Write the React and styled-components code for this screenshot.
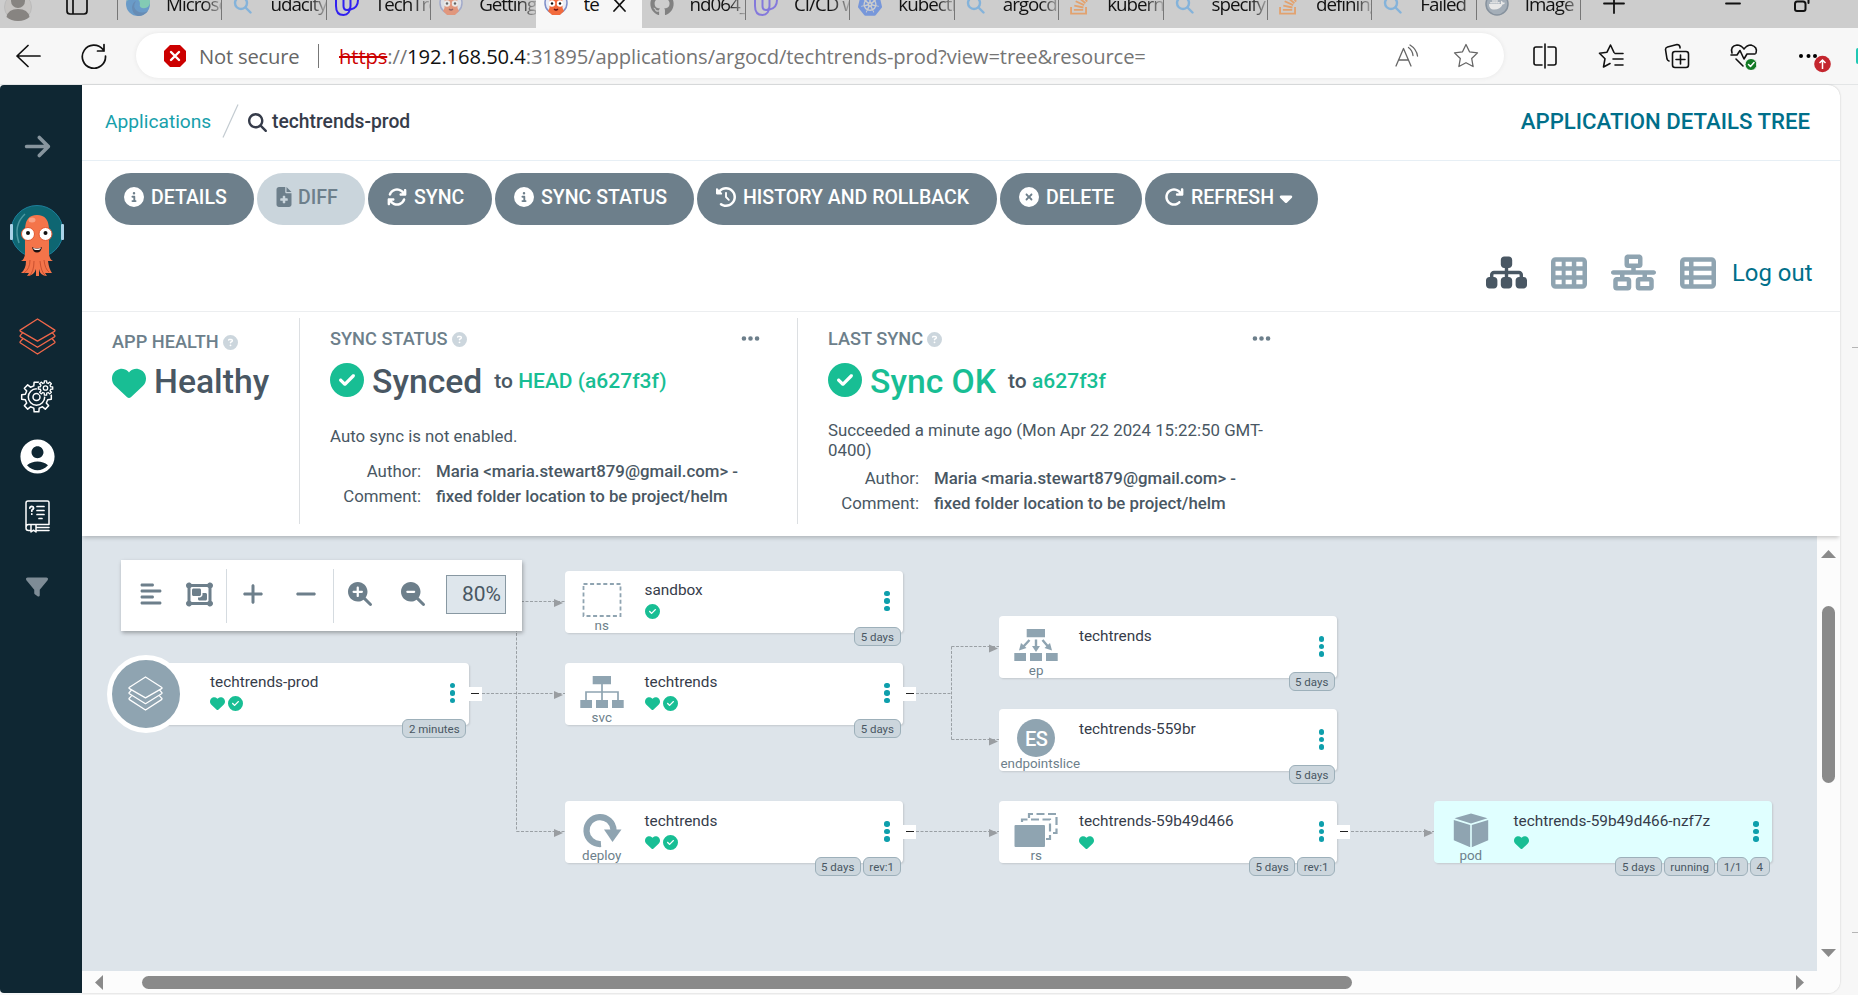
import React from 'react';
import styled, { createGlobalStyle, css } from 'styled-components';
import {
  FaCircleInfo, FaFileMedical, FaArrowsRotate, FaClockRotateLeft, FaCircleXmark,
  FaArrowRotateRight, FaCaretDown, FaSitemap, FaTableCells, FaNetworkWired, FaTableList,
  FaHeart, FaCircleCheck, FaCircleQuestion, FaEllipsis, FaAlignLeft, FaObjectGroup,
  FaPlus, FaMinus, FaMagnifyingGlassPlus, FaMagnifyingGlassMinus, FaFilter, FaArrowRight,
  FaMagnifyingGlass, FaGithub, FaDocker, FaStackOverflow,
} from 'react-icons/fa6';
import { MdAccountCircle } from 'react-icons/md';
import { SiKubernetes } from 'react-icons/si';

const slate = '#6d7f8b';
const mist = '#8fa4b1';
const ink = '#495763';
const green = '#18be94';
const teal = '#006f8a';

const GlobalStyle = createGlobalStyle`
  * { box-sizing: border-box; }
  body { margin: 0; overflow: hidden; background: #f7f7f7; font-family: Roboto, "Liberation Sans", sans-serif; }
  svg { display: block; flex: none; }
`;

const Window = styled.div`
  width: 1858px;
  height: 995px;
  display: flex;
  flex-direction: column;
  overflow: hidden;
  background: #f7f7f7;
`;

/* ---------- browser tabs ---------- */

const TabStrip = styled.div`
  flex: none;
  height: 28px;
  display: flex;
  background: #cdcdcd;
  overflow: hidden;
  font: 18.8px/28px "Open Sans", "Noto Sans", sans-serif;
  letter-spacing: -1px;
  color: #111;
`;

const StripLead = styled.div`
  flex: none;
  width: 118px;
  height: 20px;
  display: flex;
  align-items: flex-start;
  gap: 34px;
  padding-left: 4px;
  border-right: 1px solid #777;
`;

const Tab = styled.div`
  width: 104.4px;
  height: ${(p) => (p.$active ? 28 : 20)}px;
  display: flex;
  flex: none;
  border-right: ${(p) => (p.$bare ? 'none' : '1px solid #777')};
  ${(p) => p.$active && css`
    width: 106px;
    background: #f7f7f7;
    border-right: none;
  `}
`;

const Favicon = styled.div`
  width: 24px;
  height: 24px;
  flex: none;
  margin: -8px 16px 0 8px;
  opacity: ${(p) => (p.$dim ? 0.55 : 1)};
`;

const TabTitle = styled.div`
  flex: 1;
  min-width: 0;
  height: 28px;
  margin-top: -10px;
  overflow: hidden;
  white-space: nowrap;
  ${(p) => p.$fade && css`
    mask-image: linear-gradient(90deg, #000 68%, rgba(0, 0, 0, 0.2));
  `}
`;

const StripButtons = styled.div`
  flex: 1;
  display: flex;
`;

/* ---------- browser toolbar ---------- */

const Toolbar = styled.div`
  flex: none;
  height: 57px;
  display: flex;
  align-items: center;
  padding: 0 0 1px 16px;
  border-bottom: 1px solid #e3e5e6;
  background: #f7f7f7;
`;

const Back = styled.div`
  flex: none;
  width: 65px;
`;

const Reload = styled.div`
  flex: none;
  width: 55px;
`;

const Address = styled.div`
  flex: none;
  width: 1368px;
  height: 45px;
  display: flex;
  align-items: center;
  padding: 0 25px 0 27px;
  border-radius: 23px;
  background: #fff;
  box-shadow: 0 0 5px rgba(0, 0, 0, 0.07);
  font: 20.2px/30px "Open Sans", "Noto Sans", sans-serif;
  color: #757575;
  white-space: nowrap;
`;

const Security = styled.div`
  width: 107px;
  padding-left: 12px;
  color: #666;
  letter-spacing: -0.2px;
`;

const AddressRule = styled.div`
  width: 1px;
  height: 24px;
  margin: 0 20px 0 24px;
  background: #777;
`;

const Url = styled.div`
  flex: 1;
  letter-spacing: -0.1px;
`;

const Scheme = styled.span`
  color: #c00;
  text-decoration: line-through;
`;

const Host = styled.span`
  color: #111;
`;

const AddressTools = styled.div`
  display: flex;
  align-items: center;
  gap: 34px;
`;

const BrowserTools = styled.div`
  flex: 1;
  min-width: 0;
  display: flex;
  align-items: center;
  gap: 40px;
  padding-left: 28px;
`;

const CopilotEdge = styled.div`
  flex: none;
  width: 2px;
  height: 16px;
  margin-left: -16px;
  border-radius: 2px 0 0 2px;
  background: #1fc8b4;
`;

/* ---------- page frame ---------- */

const Page = styled.div`
  flex: 1;
  display: flex;
  min-height: 0;
  padding-bottom: 2px;
`;

const Sidebar = styled.nav`
  width: 82px;
  flex: none;
  display: flex;
  flex-direction: column;
  align-items: center;
  padding: 50px 8px 0 0;
  border-radius: 4px 0 0 4px;
  background: #0f2733;
  color: #fff;
`;

const NavItem = styled.div`
  height: ${(p) => p.$h}px;
  display: flex;
  flex: none;
  align-items: center;
  justify-content: center;
  color: ${(p) => p.$color || '#fff'};
`;

const Main = styled.main`
  width: 1758px;
  flex: none;
  display: flex;
  flex-direction: column;
  border-radius: 0 12px 12px 0;
  background: #fff;
  box-shadow: 0 0 2px rgba(0, 0, 0, 0.22);
  overflow: hidden;
`;

const Edge = styled.div`
  flex: 1;
  display: flex;
  flex-direction: column;
  align-items: flex-end;
  padding-top: 262px;
  gap: 584px;
`;

const EdgeMark = styled.div`
  width: 6px;
  height: 1px;
  background: #b5b5b5;
`;

/* ---------- page header ---------- */

const Breadcrumbs = styled.header`
  flex: none;
  height: 76px;
  display: flex;
  align-items: center;
  padding: 0 30px 3px 23px;
  border-bottom: 1px solid #e7eff5;
  font-size: 19.2px;
  line-height: 24px;
`;

const Crumb = styled.a`
  width: 117px;
  margin-top: 2px;
  color: #17a0ab;
`;

const CrumbCurrent = styled.div`
  display: flex;
  flex: 1;
  align-items: center;
  gap: 5px;
  margin: 2px 0 0 9px;
  font-size: 19.3px;
  font-weight: 500;
  color: #363c4a;
`;

const PageTitle = styled.div`
  font-size: 22.2px;
  font-weight: 500;
  color: ${teal};
`;

const Actions = styled.div`
  flex: none;
  height: 64px;
  display: flex;
  gap: 3px;
  padding: 12px 0 0 23px;
`;

const ActionButton = styled.button`
  width: ${(p) => p.$w}px;
  height: 52px;
  display: flex;
  align-items: center;
  gap: 7px;
  padding: 0 0 3px 19px;
  border: 0;
  border-radius: 26px;
  background: ${(p) => (p.$off ? '#cad5dc' : slate)};
  color: ${(p) => (p.$off ? slate : '#fff')};
  font: 500 19.5px/24px Roboto, sans-serif;
  white-space: nowrap;
  > svg {
    margin: 0 ${(p) => (p.$off ? -3 : 0)}px 1px ${(p) => (p.$off ? -2 : 0)}px;
  }
`;

const Caret = styled.span`
  margin-left: -5px;
`;

const Views = styled.div`
  flex: none;
  height: 87px;
  display: flex;
  align-items: center;
  justify-content: flex-end;
  gap: 24px;
  padding: 9px 27px 0 0;
  border-bottom: 1px solid #eceef0;
  color: ${mist};
`;

const ViewIcon = styled.div`
  display: flex;
  color: ${(p) => (p.$on ? ink : mist)};
`;

const Logout = styled.a`
  width: 81px;
  margin-left: -8px;
  font-size: 23.9px;
  line-height: 30px;
  color: ${teal};
  white-space: nowrap;
`;

/* ---------- status summary ---------- */

const Summary = styled.section`
  position: relative;
  z-index: 1;
  flex: none;
  height: 224px;
  display: flex;
  padding: 6px 0 12px 30px;
  background: #fff;
  box-shadow: 0 3px 4px -1px rgba(0, 0, 0, 0.2);
  color: ${ink};
`;

const Panel = styled.div`
  width: ${(p) => p.$w}px;
  padding: ${(p) => p.$top}px ${(p) => p.$right || 0}px 0 ${(p) => p.$left}px;
  border-right: ${(p) => (p.$last ? 'none' : '1px solid #dcdfe2')};
`;

const PanelHead = styled.div`
  height: 20px;
  display: flex;
  align-items: center;
  gap: 4px;
  font-size: 18.2px;
  font-weight: 500;
  line-height: 20px;
  color: ${slate};
  white-space: nowrap;
  > svg { margin-bottom: 2px; }
`;

const Hint = styled.span`
  flex: 1;
  color: #ccd6dd;
`;

const StatusLine = styled.div`
  height: 34px;
  display: flex;
  align-items: center;
  margin-top: ${(p) => p.$top}px;
  white-space: nowrap;
`;

const HealthMark = styled.span`
  margin-top: 6px;
  color: ${green};
`;

const StatusName = styled.span`
  margin: 4px 12px 0 8px;
  font-size: 33.7px;
  font-weight: 500;
  line-height: 40px;
  color: ${(p) => (p.$ok ? green : ink)};
`;

const Revision = styled.span`
  margin-top: 2px;
  font-size: 21px;
  font-weight: 500;
  line-height: 26px;
  a { color: ${green}; }
`;

const Note = styled.p`
  margin: ${(p) => p.$top}px 0 0;
  font-size: 16.82px;
  line-height: 20px;
`;

const Facts = styled.dl`
  display: grid;
  grid-template-columns: 91px 1fr;
  column-gap: 15px;
  margin: ${(p) => p.$top}px 0 0;
  font-size: 16.82px;
  line-height: 25px;
  white-space: nowrap;
  dt { text-align: right; }
  dd { margin: 0; font-weight: 500; }
`;

/* ---------- resource tree ---------- */

const TreeArea = styled.section`
  flex: 1;
  min-height: 0;
  display: grid;
  grid-template-columns: 1735px 23px;
  grid-template-rows: 435px 22px;
  background: #fcfcfc;
`;

const Canvas = styled.div`
  position: relative;
  background: #dde4ea;
  overflow: hidden;
`;

const Edges = styled.svg`
  position: absolute;
  inset: 0;
`;

const VScroll = styled.div`
  display: flex;
  flex-direction: column;
  align-items: center;
  padding: 14px 0 0 0;
`;

const VThumb = styled.div`
  width: 13px;
  height: 177px;
  margin: 48px 0 166px;
  border-radius: 7px;
  background: #8a8a8a;
`;

const HScroll = styled.div`
  display: flex;
  align-items: center;
  padding: 1px 0 0 13px;
`;

const HThumb = styled.div`
  width: 1210px;
  height: 13px;
  margin: 0 444px 0 39px;
  border-radius: 7px;
  background: #8a8a8a;
`;

const GraphToolbar = styled.div`
  position: absolute;
  left: 39px;
  top: 24px;
  width: 401px;
  height: 71px;
  display: flex;
  align-items: center;
  background: #fff;
  box-shadow: 1px 2px 4px rgba(0, 0, 0, 0.3);
  color: ${slate};
`;

const ToolGroup = styled.div`
  width: ${(p) => p.$w}px;
  height: 54px;
  display: flex;
  align-items: center;
  gap: ${(p) => p.$gap}px;
  padding: 0 0 3px ${(p) => p.$left}px;
  border-right: ${(p) => (p.$last ? 'none' : '1px solid #d5dbe0')};
`;

const ZoomLevel = styled.div`
  width: 60px;
  height: 39px;
  margin: 1px 0 0 -8px;
  padding-right: 4px;
  border: 1px solid #8898a2;
  background: #dee6ec;
  color: ${ink};
  font-size: 21px;
  line-height: 37px;
  text-align: right;
`;

const Card = styled.div`
  position: absolute;
  left: ${(p) => p.$x}px;
  top: ${(p) => p.$y}px;
  width: 338px;
  height: 62px;
  display: flex;
  border-radius: 4px;
  background: ${(p) => (p.$lit ? '#e0ffff' : '#fff')};
  box-shadow: 1px 1px 2px rgba(0, 0, 0, 0.12);
`;

const Kind = styled.div`
  width: 79.5px;
  flex: none;
  display: flex;
  flex-direction: column;
  align-items: safe center;
  padding: 10px 7px 0 1px;
  font-size: 13.4px;
  line-height: 15px;
  color: ${slate};
`;

const KindIcon = styled.div`
  height: 37px;
`;

const RootBadge = styled.div`
  position: absolute;
  left: -24px;
  top: -8px;
  width: 78px;
  height: 78px;
  display: flex;
  align-items: center;
  justify-content: center;
  border: 5px solid #fff;
  border-radius: 50%;
  background: ${mist};
`;

const Info = styled.div`
  flex: 1;
  padding-top: 9.8px;
  font-size: 15.35px;
  line-height: 20px;
  color: #363c4a;
  white-space: nowrap;
`;

const Marks = styled.div`
  height: 15px;
  display: flex;
  align-items: center;
  gap: 3px;
  margin-top: 4px;
  color: ${green};
`;

const Kebab = styled.div`
  width: 6px;
  display: flex;
  flex: none;
  flex-direction: column;
  align-items: center;
  justify-content: center;
  gap: 2px;
  margin: 0 13px 1px 0;
`;

const Dot = styled.i`
  width: 5.5px;
  height: 5.5px;
  border-radius: 50%;
  background: #0e9fac;
`;

const Pills = styled.div`
  position: absolute;
  right: 2.5px;
  bottom: -13px;
  display: flex;
  gap: 2px;
`;

const Pill = styled.span`
  height: 19px;
  padding: 0 5.5px;
  border: 1px solid #9db0ba;
  border-radius: 6px;
  background: #ccd6dd;
  color: ${ink};
  font-size: 11.5px;
  line-height: 18px;
  white-space: nowrap;
`;

const Collapse = styled.div`
  position: absolute;
  right: -13px;
  top: 24px;
  width: 13px;
  height: 14px;
  display: flex;
  align-items: center;
  justify-content: center;
  background: #fff;
  &::before {
    content: '';
    width: 8px;
    height: 1px;
    margin-bottom: 1px;
    background: #222;
  }
`;

/* ---------- drawings ---------- */

const LayersIcon = ({ size = 36, color = '#fff', width = 1.4 }) => (
  <svg width={size} height={size} viewBox="0 0 36 36" fill="none" stroke={color} strokeWidth={width} strokeLinejoin="round" strokeLinecap="round">
    <path d="M18 1 34.5 11.5Q35.5 12.2 34.5 13L18 22.5 1.500 13Q.5 12.200 1.500 11.500Z" />
    <path d="M3.500 14.500 1.500 16.700Q.5 17.500 1.500 18.300L18 28.500 34.500 18.300Q35.500 17.500 34.500 16.700L32.500 14.500" />
    <path d="M3.500 20.500 1.500 22.700Q.5 23.500 1.500 24.300L18 35 34.500 24.300Q35.500 23.500 34.500 22.700L32.500 20.500" />
  </svg>
);

const gear = (cx, cy, teeth, outer, inner) => {
  const pts = [];
  for (let i = 0; i < teeth; i += 1) {
    [[-0.3, inner], [-0.2, outer], [0.2, outer], [0.3, inner]].forEach(([o, r]) => {
      const a = ((i + o) / teeth) * Math.PI * 2;
      pts.push(`${(cx + r * Math.cos(a)).toFixed(2)} ${(cy + r * Math.sin(a)).toFixed(2)}`);
    });
  }
  return `M${pts.join('L')}Z`;
};

const GearsIcon = () => (
  <svg width="34" height="34" viewBox="0 0 34 34" fill="none" stroke="#fff" strokeWidth="1.5" strokeLinejoin="round">
    <path d={gear(16.5, 18, 8, 15, 11.5)} />
    <circle cx="16.5" cy="18" r="8.2" />
    <circle cx="16.5" cy="18" r="3.5" />
    <circle cx="25.5" cy="9" r="8.8" fill="#0f2733" stroke="none" />
    <path d={gear(25.5, 9, 8, 7.3, 5.3)} strokeWidth="1.3" />
    <circle cx="25.5" cy="9" r="2.2" strokeWidth="1.3" />
  </svg>
);

const BookIcon = () => (
  <svg width="25" height="33" viewBox="0 0 25 33" fill="none" stroke="#fff" strokeWidth="1.5" strokeLinecap="round" strokeLinejoin="round">
    <path d="M24 24.500V2.500Q24 1 22.500 1H3Q1 1 1 3V28Q1 30.500 3.500 30.500H6M11 30.500H24M24 24.500H3.500Q1 24.500 1 27.500M24 27.500H12M6 24.500V32L8.500 30.200 11 32V24.500" />
    <path d="M4.800 8.200Q5 6.300 6.800 6.300 8.600 6.500 8.600 8 8.400 9.300 6.800 10.200V11.200M6.800 13.800V14.200M12 6.500H19M12 10.500H19M12 14.500H19M14 18.500H17" strokeWidth="1.7" />
  </svg>
);

const Octopus = ({ width = 56, height = 74 }) => (
  <svg width={width} height={height} viewBox="0 0 56 74">
    <circle cx="28" cy="27.5" r="26" fill="#0e6672" stroke="#1e7f9b" strokeWidth="1" />
    <rect x="1" y="20" width="3" height="16" rx="1" fill="#a9d3e8" />
    <rect x="52" y="20" width="3" height="16" rx="1" fill="#a9d3e8" />
    <path d="M16 10Q4 21 10 39" fill="none" stroke="#4b98a1" strokeWidth="1.5" />
    <path d="M16 26Q16 11 28 11T40 26V49Q40 55 44 57H39Q40 65 43 69H36L38 72Q31 72 30 65V72H27V65Q25 72 18 72L20 69H12Q17 65 17 57H12Q16 55 16 49Z" fill="#f4744a" />
    <path d="M21 56Q21 65 15 69M25 57Q25 68 20 72M31 57Q32 68 36 71M35 56Q36 65 40 68" fill="none" stroke="#c9502f" strokeWidth="1" />
    <ellipse cx="23" cy="16" rx="3.5" ry="2.5" fill="#f9a184" />
    <circle cx="19" cy="30" r="6.5" fill="#fff" stroke="#e4572f" strokeWidth="1" />
    <circle cx="36.5" cy="30" r="6.5" fill="#fff" stroke="#e4572f" strokeWidth="1" />
    <circle cx="19" cy="29" r="2" fill="#111" />
    <circle cx="36.5" cy="29" r="2" fill="#111" />
    <path d="M23 43Q28 46 33 43Q32 48.500 28 48.500T23 43Z" fill="#1b1112" />
    <path d="M24 43.800Q28 45.500 32 43.800L31 45.500Q28 46.500 25 45.500Z" fill="#fff" />
  </svg>
);

const ArgoFavicon = () => (
  <svg width="24" height="24" viewBox="0 0 24 24">
    <circle cx="12" cy="11" r="11" fill="#e9ecf6" stroke="#7f8fc9" strokeWidth="1.5" />
    <path d="M5.500 11Q5.500 3 12 3T18.500 11V16L20 19 16 23H8L4 19 5.500 16Z" fill="#f26b3d" />
    <circle cx="8" cy="11.5" r="3.2" fill="#fff" />
    <circle cx="16" cy="11.5" r="3.2" fill="#fff" />
    <circle cx="8" cy="11.5" r="1.2" fill="#111" />
    <circle cx="16" cy="11.5" r="1.2" fill="#111" />
    <path d="M10 17Q12 19 14 17" stroke="#611" fill="none" strokeWidth="1.2" />
  </svg>
);

const EdgeFavicon = () => (
  <svg width="24" height="24" viewBox="0 0 24 24">
    <circle cx="12" cy="12" r="12" fill="#1b74c5" />
    <path d="M1 9Q3 0 12 0 24 1 24 11 23 17 16 16 13 15 14 12 14 7 9 7 3 7 1 9Z" fill="#48c8a0" />
    <path d="M10 9Q6 15 11 19 16 22 22 19 18 24 12 24 6 22 6 15 7 10 10 9Z" fill="#1457a0" />
  </svg>
);

const SearchFavicon = () => (
  <svg width="24" height="24" viewBox="0 0 24 24" fill="none" stroke="#4a9ee6" strokeWidth="2.4" strokeLinecap="round">
    <circle cx="11" cy="11" r="6" /><path d="m15.500 15.500 5 5" />
  </svg>
);

const UdacityFavicon = ({ color }) => (
  <svg width="24" height="24" viewBox="0 0 24 24" fill="none" stroke={color} strokeWidth="2" strokeLinecap="round">
    <path d="M8.500 0V14Q8.500 18 12 18T15.500 14V0M1 0V14Q1 23 8.500 23 15 23 15.500 14M15.500 17.500Q23 16 23 8V0" />
  </svg>
);

const DockerDisc = () => (
  <svg width="24" height="24" viewBox="0 0 24 24">
    <circle cx="12" cy="12" r="11" fill="#8496a8" stroke="#4c6176" strokeWidth="1.5" />
    <FaDocker x="4" y="4" size={16} color="#fff" />
  </svg>
);

const kindIcons = {
  ns: (
    <svg width="44" height="37" viewBox="0 0 44 37"><rect x="3.5" y="3" width="37" height="32" fill="none" stroke={mist} strokeWidth="1.8" strokeDasharray="4 2.6" /></svg>
  ),
  svc: (
    <svg width="44" height="37" viewBox="0 0 44 37" fill={mist}>
      <path d="M12.700 3H31V11.300H12.700ZM.3 27H12V35H.3ZM16 27H28V35H16ZM32 27H43.700V35H32Z" />
      <path d="M6 27V19H38V27M22 11V27" fill="none" stroke={mist} strokeWidth="1.7" />
    </svg>
  ),
  ep: (
    <svg width="44" height="37" viewBox="0 0 44 37" fill={mist}>
      <path d="M12.700 3H31V11.300H12.700ZM.3 27H12V35H.3ZM16 27H28V35H16ZM32 27H43.700V35H32Z" />
      <path d="M15.500 14 9 21M22 13.500V21M28.500 14 34 20.500" fill="none" stroke={mist} strokeWidth="2.4" />
      <path d="M5 24.500 7 17 12.500 22ZM18 20H26L22 26ZM38 24.500 36 17 30.500 22Z" />
    </svg>
  ),
  deploy: (
    <svg width="44" height="37" viewBox="0 0 44 37">
      <path d="M21 33A13.500 13.500 0 1 1 33.500 19" fill="none" stroke={mist} strokeWidth="6.2" />
      <path d="M24 18.500H41.500L32.500 31Z" fill={mist} />
    </svg>
  ),
  rs: (
    <svg width="44" height="37" viewBox="0 0 44 37">
      <path d="M8 11V8.500H36V28H30" fill="none" stroke={mist} strokeWidth="2.2" strokeDasharray="8 3.5" />
      <path d="M15 7V3H42.500V22H38" fill="none" stroke={mist} strokeWidth="2.2" strokeDasharray="8 3.5" />
      <rect x=".5" y="14" width="30.5" height="22" rx="1" fill={mist} />
    </svg>
  ),
  pod: (
    <svg width="36" height="37" viewBox="0 0 36 37" fill={mist}>
      <path d="M18 2.500 34.500 7.200 18 12.500 1.500 7.200ZM.8 9 17.200 14V36.300L.8 29.300ZM35.200 9 18.800 14V36.300L35.200 29.300Z" />
    </svg>
  ),
};

const EsDisc = styled.div`
  width: 38px;
  height: 38px;
  border-radius: 50%;
  background: ${mist};
  color: #fff;
  font-size: 20px;
  font-weight: 500;
  letter-spacing: -0.5px;
  line-height: 40px;
  text-align: center;
`;

const tabs = [
  { icon: <EdgeFavicon />, title: 'Microsoft', dim: true },
  { icon: <SearchFavicon />, title: 'udacity', dim: true },
  { icon: <UdacityFavicon color="#3120f0" />, title: 'TechTrends' },
  { icon: <ArgoFavicon />, title: 'Getting', dim: true, bare: true },
  { icon: <ArgoFavicon />, title: 'te', active: true },
  { icon: <FaGithub size={24} color="#444" />, title: 'nd064_', dim: true },
  { icon: <UdacityFavicon color="#4a35e8" />, title: 'CI/CD w', dim: true },
  { icon: <SiKubernetes size={24} color="#326ce5" />, title: 'kubectl', dim: true },
  { icon: <SearchFavicon />, title: 'argocd', dim: true },
  { icon: <FaStackOverflow size={24} color="#f48024" />, title: 'kuberne', dim: true },
  { icon: <SearchFavicon />, title: 'specify', dim: true },
  { icon: <FaStackOverflow size={24} color="#f48024" />, title: 'defining', dim: true },
  { icon: <SearchFavicon />, title: 'Failed', dim: true },
  { icon: <DockerDisc />, title: 'Image', dim: true },
];

const actions = [
  [149, FaCircleInfo, 'DETAILS'],
  [108, FaFileMedical, 'DIFF', true],
  [124, FaArrowsRotate, 'SYNC'],
  [199, FaCircleInfo, 'SYNC STATUS'],
  [300, FaClockRotateLeft, 'HISTORY AND ROLLBACK'],
  [142, FaCircleXmark, 'DELETE'],
  [173, FaArrowRotateRight, 'REFRESH'],
];

const nodes = [
  { x: 483, y: 34.6, kind: 'ns', name: 'sandbox', check: true, pills: ['5 days'] },
  { x: 483, y: 126.6, kind: 'svc', name: 'techtrends', heart: true, check: true, pills: ['5 days'], open: true },
  { x: 483, y: 265, kind: 'deploy', name: 'techtrends', heart: true, check: true, pills: ['5 days', 'rev:1'], open: true },
  { x: 917.4, y: 80.2, kind: 'ep', name: 'techtrends', pills: ['5 days'] },
  { x: 917.4, y: 173, kind: 'endpointslice', name: 'techtrends-559br', pills: ['5 days'] },
  { x: 917.4, y: 265, kind: 'rs', name: 'techtrends-59b49d466', heart: true, pills: ['5 days', 'rev:1'], open: true },
  { x: 1352, y: 265, kind: 'pod', name: 'techtrends-59b49d466-nzf7z', heart: true, pills: ['5 days', 'running', '1/1', '4'], lit: true },
];

function Node({ x, y, kind, name, heart, check, pills, open, lit, root }) {
  return (
    <Card $x={x} $y={y} $lit={lit}>
      {root ? (
        <>
          <RootBadge><LayersIcon size={35} width={1.3} /></RootBadge>
          <Kind />
        </>
      ) : (
        <Kind>
          <KindIcon>{kindIcons[kind] || <EsDisc>ES</EsDisc>}</KindIcon>
          <span>{kind}</span>
        </Kind>
      )}
      <Info>
        {name}
        <Marks>
          {heart && <FaHeart size={15} />}
          {check && <FaCircleCheck size={15} />}
        </Marks>
      </Info>
      <Kebab><Dot /><Dot /><Dot /></Kebab>
      <Pills>{pills.map((p) => <Pill key={p}>{p}</Pill>)}</Pills>
      {open && <Collapse />}
    </Card>
  );
}

const arrows = [[472, 67], [472, 159], [472, 297], [907, 112.5], [907, 205.5], [907, 297], [1342, 297]];

const line = { fill: 'none', stroke: '#111', strokeLinecap: 'round', strokeLinejoin: 'round' };

export default function App() {
  return (
    <Window>
      <GlobalStyle />
      <TabStrip>
        <StripLead>
          <svg width="28" height="21" viewBox="0 0 28 21">
            <circle cx="14" cy="7" r="13.5" fill="#c6c4c2" stroke="#bbb" />
            <circle cx="14" cy="1" r="7" fill="#878481" />
            <path d="M2.500 17Q4 9 14 9T25.500 17Q21 21 14 21T2.500 17Z" fill="#878481" />
          </svg>
          <svg width="22" height="16" viewBox="0 0 22 16" {...line} strokeWidth="1.7">
            <path d="M1 -4V11Q1 14 4 14H18Q21 14 21 11V-4M7 -4V14" />
          </svg>
        </StripLead>
        {tabs.map((t, i) => (
          <Tab key={i} $active={t.active} $bare={t.bare}>
            <Favicon $dim={t.dim}>{t.icon}</Favicon>
            <TabTitle $fade={!t.active}>{t.title}</TabTitle>
            {t.active && (
              <svg width="33" height="20" viewBox="0 0 33 20" {...line} strokeWidth="1.7"><path d="M5 -1 16 11M16 -1 5 11" /></svg>
            )}
          </Tab>
        ))}
        <StripButtons>
          <svg width="276" height="20" viewBox="0 0 276 20" {...line} strokeWidth="1.8">
            <path d="M23 3.500H43M33 -5V13M145 3.500H159" />
            <path d="M216 1.500H222Q224.500 1.500 224.500 4V9Q224.500 11 222.500 11H216Q214 11 214 9V4Q214 1.500 216 1.500M227.500 -2V3" strokeWidth="2" />
          </svg>
        </StripButtons>
      </TabStrip>

      <Toolbar>
        <Back>
          <svg width="25" height="24" viewBox="0 0 25 24" {...line} strokeWidth="1.7"><path d="M24 12H1M12 1.500 1 12 12 22.500" /></svg>
        </Back>
        <Reload>
          <svg width="26" height="26" viewBox="0 0 26 26" {...line} strokeWidth="1.7"><path d="M24.500 13A11.600 11.600 0 1 1 22 6.500L23 8M23 1.500V8H16.500" /></svg>
        </Reload>
        <Address>
          <svg width="24" height="24" viewBox="0 0 24 24">
            <path d="M7 1H17L23 7V17L17 23H7L1 17V7Z" fill="#c00" />
            <path d="m8 8 8 8M16 8l-8 8" stroke="#fff" strokeWidth="2.4" strokeLinecap="round" />
          </svg>
          <Security>Not secure</Security>
          <AddressRule />
          <Url><Scheme>https</Scheme>://<Host>192.168.50.4</Host>:31895/applications/argocd/techtrends-prod?view=tree&amp;resource=</Url>
          <AddressTools>
            <svg width="24" height="24" viewBox="0 0 24 24" {...line} stroke="#666" strokeWidth="1.3">
              <path d="M1 22 8.500 4.500 16 22M3.500 16H13.500M13.500 3.500Q17.500 6.500 18 11.500M15 1Q21.500 5 22.500 12" />
            </svg>
            <svg width="26" height="25" viewBox="0 0 26 25" {...line} stroke="#666" strokeWidth="1.3">
              <path d="m13 1.500 3.500 7.300 8 1.100-5.800 5.600 1.400 8-7.100-3.800-7.100 3.800 1.400-8L1.500 9.900l8-1.100Z" />
            </svg>
          </AddressTools>
        </Address>
        <BrowserTools>
          <svg width="26" height="26" viewBox="0 0 26 26" {...line} strokeWidth="1.6"><path d="M10 4H4Q2 4 2 6V20Q2 22 4 22H10M16 4H22Q24 4 24 6V20Q24 22 22 22H16M13 1V25" /></svg>
          <svg width="26" height="26" viewBox="0 0 26 26" {...line} strokeWidth="1.6"><path d="M16 9.500 12.500 2 9 9.200 1.500 10.300 7 15.700 5.500 24 12 20.500M17 10.500H25M15 16H25M17 22H25" /></svg>
          <svg width="26" height="26" viewBox="0 0 26 26" {...line} strokeWidth="1.6"><path d="M5 18Q3.500 17.500 3 16L1.500 6.500Q1.500 4.500 3.500 4L13 1.500Q15.500 1.500 16 4V5M11 8.500H22Q24.500 8.500 24.500 11V22Q24.500 24.500 22 24.500H11Q8.500 24.500 8.500 22V11Q8.500 8.500 11 8.500M16.500 12V21M12 16.500H21" /></svg>
          <svg width="28" height="28" viewBox="0 0 28 28" {...line} strokeWidth="1.6">
            <path d="M2 11Q0 4 7 3 11 3 14 7 17 3 21 3 28 5 26 11M1 13H7L10 8.500 14 17 17 12H25M6 17 13 24" />
            <circle cx="21" cy="22.5" r="6" fill="#137a25" stroke="#fff" strokeWidth="1" />
            <path d="m18.500 22.500 2 2 3.500-4" stroke="#fff" strokeWidth="1.5" />
          </svg>
          <svg width="34" height="34" viewBox="0 0 34 34">
            <circle cx="3" cy="17" r="2" /><circle cx="10.5" cy="17" r="2" /><circle cx="17" cy="17" r="2" />
            <circle cx="24.5" cy="25" r="8.3" fill="#c4262e" />
            <path d="M24.500 30V21M21.500 24 24.500 21 27.500 24" fill="none" stroke="#fff" strokeWidth="1.5" />
          </svg>
          <CopilotEdge />
        </BrowserTools>
      </Toolbar>

      <Page>
        <Sidebar>
          <NavItem $h={23} $color="#87959e"><FaArrowRight size={29} /></NavItem>
          <NavItem $h={166}><Octopus /></NavItem>
          <NavItem $h={25}><LayersIcon color="#f0674a" size={37} width={1.3} /></NavItem>
          <NavItem $h={94}><GearsIcon /></NavItem>
          <NavItem $h={26}><MdAccountCircle size={41} /></NavItem>
          <NavItem $h={94}><BookIcon /></NavItem>
          <NavItem $h={48} $color="#7e8c96"><FaFilter size={22} /></NavItem>
        </Sidebar>

        <Main>
          <Breadcrumbs>
            <Crumb>Applications</Crumb>
            <svg width="17" height="34" viewBox="0 0 17 34"><path d="M1 33.500 16 .5" stroke="#c3cbd1" strokeWidth="1.2" /></svg>
            <CrumbCurrent><FaMagnifyingGlass size={19} />techtrends-prod</CrumbCurrent>
            <PageTitle>APPLICATION DETAILS TREE</PageTitle>
          </Breadcrumbs>

          <Actions>
            {actions.map(([w, Icon, label, off]) => (
              <ActionButton key={label} $w={w} $off={off}>
                <Icon size={20} />
                {label}
                {label === 'REFRESH' && <Caret><FaCaretDown size={20} /></Caret>}
              </ActionButton>
            ))}
          </Actions>

          <Views>
            <ViewIcon $on><FaSitemap size={41} /></ViewIcon>
            <ViewIcon><FaTableCells size={36} /></ViewIcon>
            <ViewIcon><FaNetworkWired size={45} /></ViewIcon>
            <ViewIcon><FaTableList size={36} /></ViewIcon>
            <Logout>Log out</Logout>
          </Views>

          <Summary>
            <Panel $w={188} $top={14} $left={0}>
              <PanelHead>APP HEALTH<Hint><FaCircleQuestion size={15} /></Hint></PanelHead>
              <StatusLine $top={11}>
                <HealthMark><FaHeart size={34} /></HealthMark>
                <StatusName>Healthy</StatusName>
              </StatusLine>
            </Panel>
            <Panel $w={498} $top={11} $left={30} $right={36}>
              <PanelHead>SYNC STATUS<Hint><FaCircleQuestion size={15} /></Hint><FaEllipsis size={21} /></PanelHead>
              <StatusLine $top={14}>
                <FaCircleCheck size={34} color={green} />
                <StatusName>Synced</StatusName>
                <Revision>to <a>HEAD (a627f3f)</a></Revision>
              </StatusLine>
              <Note $top={29}>Auto sync is not enabled.</Note>
              <Facts $top={13}>
                <dt>Author:</dt><dd>Maria &lt;maria.stewart879@gmail.com&gt; -</dd>
                <dt>Comment:</dt><dd>fixed folder location to be project/helm</dd>
              </Facts>
            </Panel>
            <Panel $w={474} $top={11} $left={30} $last>
              <PanelHead>LAST SYNC<Hint><FaCircleQuestion size={15} /></Hint><FaEllipsis size={21} /></PanelHead>
              <StatusLine $top={14}>
                <FaCircleCheck size={34} color={green} />
                <StatusName $ok>Sync OK</StatusName>
                <Revision>to <a>a627f3f</a></Revision>
              </StatusLine>
              <Note $top={23}>Succeeded a minute ago (Mon Apr 22 2024 15:22:50 GMT-0400)</Note>
              <Facts $top={6}>
                <dt>Author:</dt><dd>Maria &lt;maria.stewart879@gmail.com&gt; -</dd>
                <dt>Comment:</dt><dd>fixed folder location to be project/helm</dd>
              </Facts>
            </Panel>
          </Summary>

          <TreeArea>
            <Canvas>
              <Edges width="1735" height="435" viewBox="0 0 1735 435">
                <g fill="none" stroke="#9aa0a5" strokeDasharray="3 1.5">
                  <path d="M400 157.500H483M434.500 65.500V295.500M434.500 65.500H483M434.500 295.500H483" />
                  <path d="M834 157.500H869.500M869.500 110.500V203.500M869.500 110.500H917M869.500 203.500H917" />
                  <path d="M834 295.500H917M1269 295.500H1352" />
                </g>
                {arrows.map(([x, y]) => <path key={`${x}-${y}`} d={`M${x} ${y - 4}L${x + 9} ${y}L${x} ${y + 4}Z`} fill="#999da1" />)}
              </Edges>
              <Node root x={48.6} y={126.6} name="techtrends-prod" heart check pills={['2 minutes']} open />
              {nodes.map((n) => <Node key={`${n.x}-${n.y}`} {...n} />)}
              <GraphToolbar>
                <ToolGroup $w={106} $gap={23} $left={18}><FaAlignLeft size={24} /><FaObjectGroup size={27} /></ToolGroup>
                <ToolGroup $w={107} $gap={29} $left={14}><FaPlus size={24} /><FaMinus size={24} /></ToolGroup>
                <ToolGroup $w={188} $gap={29} $left={14} $last>
                  <FaMagnifyingGlassPlus size={24} />
                  <FaMagnifyingGlassMinus size={24} />
                  <ZoomLevel>80%</ZoomLevel>
                </ToolGroup>
              </GraphToolbar>
            </Canvas>
            <VScroll>
              <svg width="15" height="8" viewBox="0 0 15 8"><path d="M0 8 7.500 0 15 8Z" fill="#8a8a8a" /></svg>
              <VThumb />
              <svg width="15" height="8" viewBox="0 0 15 8"><path d="M0 0 7.500 8 15 0Z" fill="#8a8a8a" /></svg>
            </VScroll>
            <HScroll>
              <svg width="8" height="15" viewBox="0 0 8 15"><path d="M8 0 0 7.500 8 15Z" fill="#8a8a8a" /></svg>
              <HThumb />
              <svg width="8" height="15" viewBox="0 0 8 15"><path d="M0 0 8 7.500 0 15Z" fill="#8a8a8a" /></svg>
            </HScroll>
          </TreeArea>
        </Main>

        <Edge><EdgeMark /><EdgeMark /></Edge>
      </Page>
    </Window>
  );
}
